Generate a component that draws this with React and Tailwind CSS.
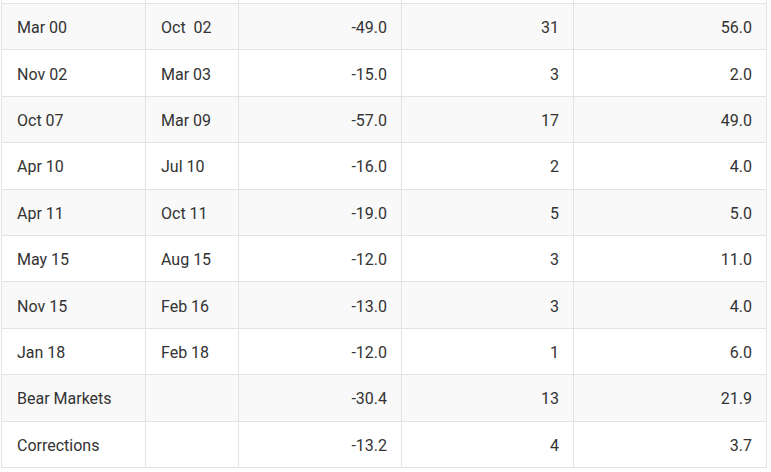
import React from 'react';

const rows = [
  ['', '', '', '', ''],
  ['Mar 00', 'Oct  02', '-49.0', '31', '56.0'],
  ['Nov 02', 'Mar 03', '-15.0', '3', '2.0'],
  ['Oct 07', 'Mar 09', '-57.0', '17', '49.0'],
  ['Apr 10', 'Jul 10', '-16.0', '2', '4.0'],
  ['Apr 11', 'Oct 11', '-19.0', '5', '5.0'],
  ['May 15', 'Aug 15', '-12.0', '3', '11.0'],
  ['Nov 15', 'Feb 16', '-13.0', '3', '4.0'],
  ['Jan 18', 'Feb 18', '-12.0', '1', '6.0'],
  ['Bear Markets', '', '-30.4', '13', '21.9'],
  ['Corrections', '', '-13.2', '4', '3.7'],
];

const widths = ['w-[144px]', 'w-[93px]', 'w-[163px]', 'w-[172px]', 'w-[193px]'];

export default function App() {
  return (
    <div className="h-[472px] w-[771px] overflow-hidden bg-white pl-px" style={{ fontFamily: 'Roboto, "Liberation Sans", sans-serif' }}>
      <table className="-mt-[43.4px] w-[766px] table-fixed border-collapse text-[16px] text-[#333]">
        <colgroup>
          {widths.map((w, i) => (
            <col key={i} className={w} />
          ))}
        </colgroup>
        <tbody>
          {rows.map((r, i) => (
            <tr key={i} className={`h-[46.4px] ${i % 2 === 1 ? 'bg-[#f9f9f9]' : 'bg-white'}`}>
              {r.map((c, j) => (
                <td
                  key={j}
                  className={`border border-[#e3e3e3] pt-[3px] pl-[15px] pr-[14px] whitespace-pre ${j < 2 ? 'text-left' : 'text-right'}`}
                >
                  {c}
                </td>
              ))}
            </tr>
          ))}
        </tbody>
      </table>
    </div>
  );
}
